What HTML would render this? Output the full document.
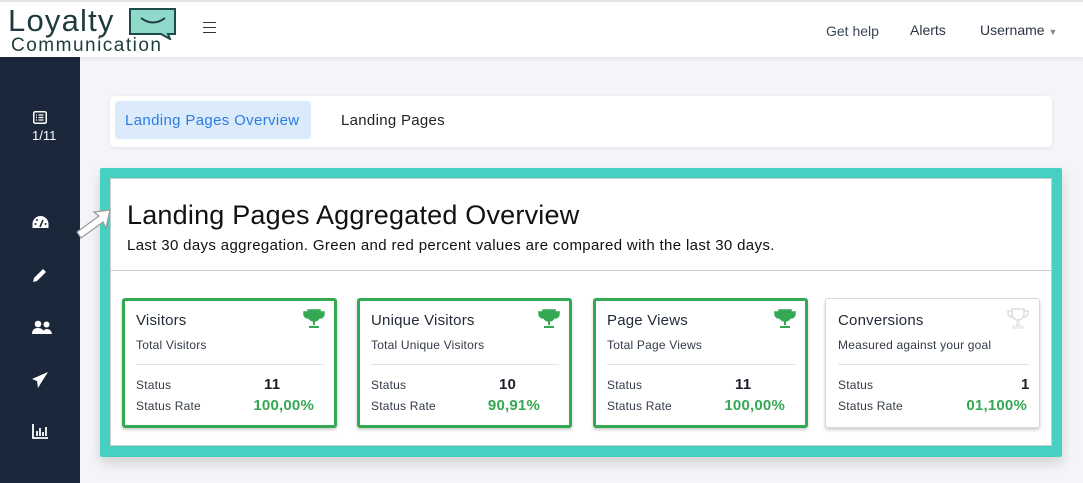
<!DOCTYPE html>
<html><head><meta charset="utf-8"><style>
*{box-sizing:border-box;margin:0;padding:0}
body{width:1083px;height:483px;overflow:hidden;background:#f3f5f8;font-family:"Liberation Sans",sans-serif;position:relative;color:#222}
.abs{position:absolute}
#hdr{left:0;top:0;width:1083px;height:57px;background:#fff;border-top:2px solid #e3e5e8;box-shadow:0 2px 4px rgba(0,0,0,.08);z-index:2}
#side{left:0;top:57px;width:80px;height:426px;background:#1b283b}
.nav{font-size:14px;color:#2c3444;top:21px}
.card{background:#fff;border-radius:4px}
.st{width:215px;height:130px;top:298px;background:#fff;border:3px solid #34a853;border-radius:3px;box-shadow:0 2px 3px rgba(0,0,0,.2);letter-spacing:.2px}
.st .t{position:absolute;left:11px;top:11px;font-size:15px;color:#222b38}
.st .s{position:absolute;left:11px;top:37px;font-size:12px;color:#333b48}
.st hr{position:absolute;left:11px;right:10px;top:63px;border:0;border-top:1px solid #e2e2e2}
.st .l1{position:absolute;left:11px;top:77px;font-size:12px;color:#333b48}
.st .l2{position:absolute;left:11px;top:98px;font-size:12px;color:#333b48}
.st .v1{position:absolute;left:139px;top:75px;font-size:15px;font-weight:bold;color:#1b1f2a}
.st .v2{position:absolute;right:20px;top:96px;font-size:15px;font-weight:bold;color:#34a853}
.st svg{position:absolute;right:9px;top:8px}
</style></head><body>
<div id="hdr" class="abs">
 <div class="abs" style="left:8px;top:1px;font-size:31px;color:#1d3b3d;letter-spacing:1.2px">Loyalty</div>
 <div class="abs" style="left:11px;top:33px;font-size:19px;color:#1d3b3d;letter-spacing:1.5px">Communication</div>
 <svg class="abs" style="left:128px;top:5px" width="50" height="33" viewBox="0 0 50 33"><path d="M2 2H47V27H40L42 32L33 27H2Z" fill="#8fd9cb" stroke="#1d4a4a" stroke-width="2"/><path d="M13 11Q25 20 37 11" fill="none" stroke="#1d3b3d" stroke-width="2"/></svg>
 <div class="abs" style="left:203px;top:20px;width:13px;height:11px;border-top:1.5px solid #333;border-bottom:1.5px solid #333"><div style="margin-top:3.5px;border-top:1.5px solid #333"></div></div>
 <div class="abs nav" style="left:826px;color:#3a4555">Get help</div>
 <div class="abs nav" style="left:910px;top:20px">Alerts</div>
 <div class="abs nav" style="left:980px;top:20px">Username <span style="font-size:9px;color:#888">▼</span></div>
</div>
<div id="side" class="abs">
 <svg class="abs" style="left:33px;top:54px" width="14" height="13" viewBox="0 0 14 13"><rect x="0.75" y="0.75" width="12.5" height="11.5" rx="1.5" fill="none" stroke="#fff" stroke-width="1.5"/><path d="M3 4h1M5.5 4h5M3 6.5h1M5.5 6.5h5M3 9h1M5.5 9h5" stroke="#fff" stroke-width="1.3"/></svg>
 <div class="abs" style="left:32px;top:71px;font-size:13px;color:#fff">1/11</div>
 <svg class="abs" style="left:32px;top:158px" width="17" height="15" viewBox="0 0 17 15"><path d="M8.5 1A8 8 0 0 0 0.5 9v4h16V9A8 8 0 0 0 8.5 1z" fill="#fff"/><path d="M8 12L11 5" stroke="#1b283b" stroke-width="1.6"/><circle cx="3.5" cy="9" r="1" fill="#1b283b"/><circle cx="5" cy="5" r="1" fill="#1b283b"/><circle cx="13.5" cy="9" r="1" fill="#1b283b"/></svg>
 <svg class="abs" style="left:32px;top:210px" width="16" height="16" viewBox="0 0 16 16"><path d="M2 11L11 2l3 3-9 9H2z" fill="#fff"/><path d="M1 15l1-4 3 3z" fill="#fff"/></svg>
 <svg class="abs" style="left:32px;top:263px" width="20" height="14" viewBox="0 0 20 14"><circle cx="6" cy="4" r="3.3" fill="#fff"/><circle cx="14.5" cy="4.5" r="3" fill="#fff"/><path d="M0 14q0-6 6-6t6 6z" fill="#fff"/><path d="M10 14q1-5 5-5t5 5z" fill="#fff"/></svg>
 <svg class="abs" style="left:32px;top:315px" width="16" height="16" viewBox="0 0 16 16"><path d="M16 0L0 7l5 2 1 7 3-5z" fill="#fff"/></svg>
 <svg class="abs" style="left:32px;top:367px" width="16" height="15" viewBox="0 0 16 15"><path d="M1 0v14h15" fill="none" stroke="#fff" stroke-width="1.8"/><path d="M5 12V7M8 12V4M11 12V8M14 12V3" stroke="#fff" stroke-width="1.8"/></svg>
</div>
<div class="abs card" style="left:110px;top:96px;width:942px;height:51px;box-shadow:0 1px 4px rgba(0,0,0,.08)">
 <div class="abs" style="left:5px;top:5px;width:196px;height:38px;background:#dcebfc;border-radius:3px;color:#2a7de1;font-size:15px;padding:11px 0 0 10px;letter-spacing:.35px">Landing Pages Overview</div>
 <div class="abs" style="left:231px;top:16px;font-size:15px;color:#222;letter-spacing:.3px">Landing Pages</div>
</div>
<div class="abs" style="left:100px;top:168px;width:962px;height:289px;background:#45d0c2;border-radius:2px;box-shadow:0 6px 12px rgba(0,0,0,.15)"></div>
<div class="abs" style="left:110px;top:178px;width:942px;height:268px;background:#fff;border:1px solid #c9cdd2">
 <div class="abs" style="left:16px;top:21px;font-size:27px;color:#111;letter-spacing:.2px">Landing Pages Aggregated Overview</div>
 <div class="abs" style="left:16px;top:58px;font-size:15px;color:#111;letter-spacing:.35px">Last 30 days aggregation. Green and red percent values are compared with the last 30 days.</div>
 <div class="abs" style="left:0;top:91px;width:940px;border-top:1px solid #c8ccd0"></div>
</div>
<svg class="abs" style="left:72px;top:208px" width="40" height="34" viewBox="0 0 40 34"><path d="M38 2L22 4l5 4L5 24l4 6 22-16 3 6z" fill="#fff" stroke="#999" stroke-width="1.2"/></svg>
<div class="abs st" style="left:122px"><div class="t">Visitors</div><div class="s">Total Visitors</div><hr><div class="l1">Status</div><div class="l2">Status Rate</div><div class="v1">11</div><div class="v2">100,00%</div>
<svg width="22" height="20" viewBox="0 0 22 20"><path d="M5 1h12v5a6 6 0 0 1-12 0z M5 3H1v2a4 4 0 0 0 4 4M17 3h4v2a4 4 0 0 1-4 4" fill="#34a853" stroke="#34a853" stroke-width="1.5"/><path d="M10 12h2v4h-2zM6 17h10v2H6z" fill="#34a853"/></svg></div>
<div class="abs st" style="left:357px"><div class="t">Unique Visitors</div><div class="s">Total Unique Visitors</div><hr><div class="l1">Status</div><div class="l2">Status Rate</div><div class="v1">10</div><div class="v2" style="right:29px">90,91%</div>
<svg width="22" height="20" viewBox="0 0 22 20"><path d="M5 1h12v5a6 6 0 0 1-12 0z M5 3H1v2a4 4 0 0 0 4 4M17 3h4v2a4 4 0 0 1-4 4" fill="#34a853" stroke="#34a853" stroke-width="1.5"/><path d="M10 12h2v4h-2zM6 17h10v2H6z" fill="#34a853"/></svg></div>
<div class="abs st" style="left:593px"><div class="t">Page Views</div><div class="s">Total Page Views</div><hr><div class="l1">Status</div><div class="l2">Status Rate</div><div class="v1">11</div><div class="v2">100,00%</div>
<svg width="22" height="20" viewBox="0 0 22 20"><path d="M5 1h12v5a6 6 0 0 1-12 0z M5 3H1v2a4 4 0 0 0 4 4M17 3h4v2a4 4 0 0 1-4 4" fill="#34a853" stroke="#34a853" stroke-width="1.5"/><path d="M10 12h2v4h-2zM6 17h10v2H6z" fill="#34a853"/></svg></div>
<div class="abs st" style="left:825px;border:1px solid #d5d8dc"><div class="t" style="left:12px;top:13px">Conversions</div><div class="s" style="left:12px;top:39px">Measured against your goal</div><hr style="left:12px;top:65px"><div class="l1" style="left:12px;top:79px">Status</div><div class="l2" style="left:12px;top:100px">Status Rate</div><div class="v1" style="left:195px;top:77px">1</div><div class="v2" style="right:12px;top:98px">01,100%</div>
<svg width="22" height="22" viewBox="0 0 22 22" style="right:10px;top:9px"><path d="M5 1h12v5a6 6 0 0 1-12 0z M5 3H1v2a4 4 0 0 0 4 4M17 3h4v2a4 4 0 0 1-4 4" fill="none" stroke="#ddd" stroke-width="1.5"/><path d="M10 12h2v5h-2zM6 18h10v2H6z" fill="none" stroke="#ddd"/></svg></div>
</body></html>
